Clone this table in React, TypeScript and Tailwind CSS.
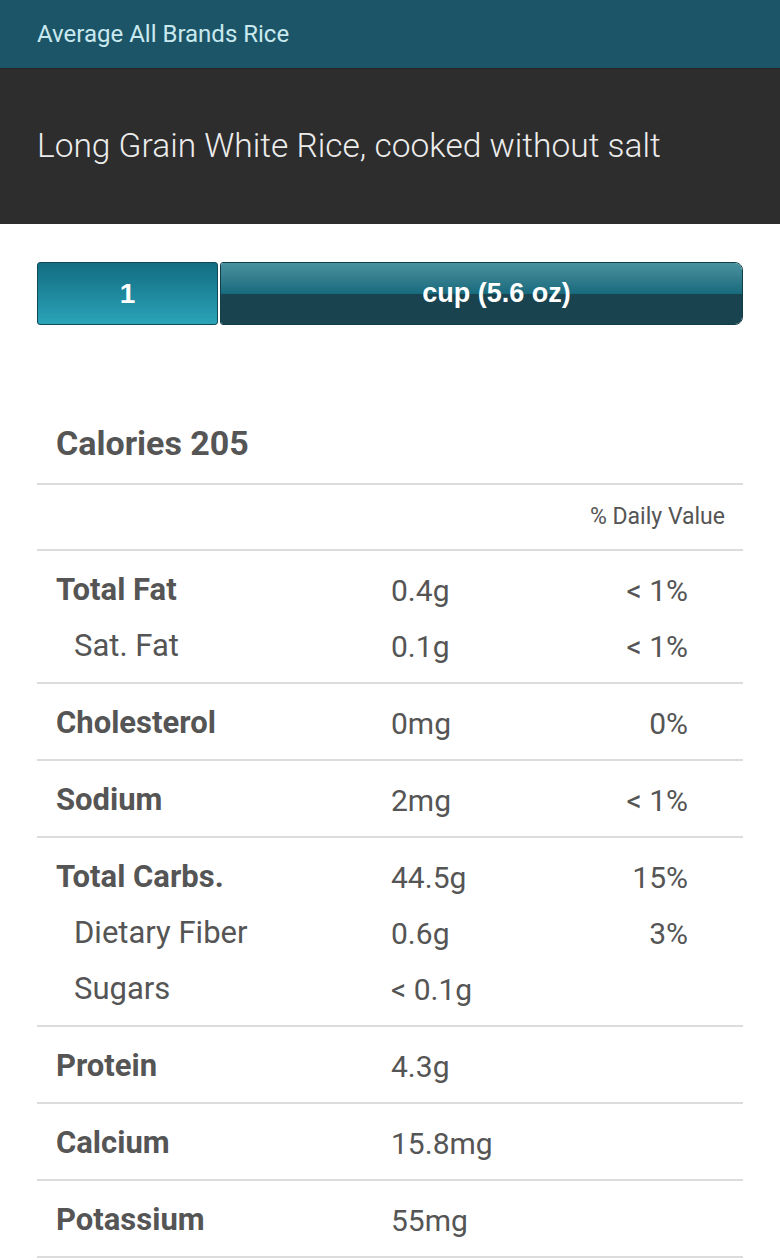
type Row = { label: string; value: string; pct?: string; sub?: boolean };

const sections: Row[][] = [
  [
    { label: "Total Fat", value: "0.4g", pct: "< 1%" },
    { label: "Sat. Fat", value: "0.1g", pct: "< 1%", sub: true },
  ],
  [{ label: "Cholesterol", value: "0mg", pct: "0%" }],
  [{ label: "Sodium", value: "2mg", pct: "< 1%" }],
  [
    { label: "Total Carbs.", value: "44.5g", pct: "15%" },
    { label: "Dietary Fiber", value: "0.6g", pct: "3%", sub: true },
    { label: "Sugars", value: "< 0.1g", sub: true },
  ],
  [{ label: "Protein", value: "4.3g" }],
  [{ label: "Calcium", value: "15.8mg" }],
  [{ label: "Potassium", value: "55mg" }],
];

export default function App() {
  return (
    <div className="w-[780px] min-h-[1260px] bg-white font-['Roboto',sans-serif] text-[#555555]">
      {/* top bar */}
      <div className="h-[68px] bg-[#1c5567] flex items-center px-[37px]">
        <span className="text-[24px] text-[#c9e9ef]">Average All Brands Rice</span>
      </div>

      {/* food title */}
      <div className="h-[156px] bg-[#2d2d2d] flex items-center px-[37px] border-t border-[#262626]">
        <h1 className="text-[33.5px] font-light text-[#ececec]">
          Long Grain White Rice, cooked without salt
        </h1>
      </div>

      <div className="px-[37px]">
        {/* serving selector */}
        <div className="mt-[38px] flex h-[63px] gap-[2px] font-['Liberation_Sans',sans-serif] font-bold text-white">
          <div className="w-[181px] flex items-center justify-center rounded-[3px] border border-[#104958] bg-gradient-to-b from-[#136d82] to-[#2aa3b8] text-[28px]">
            1
          </div>
          <div className="flex-1 flex flex-col rounded-l-[3px] rounded-r-[8px] border border-[#123e48] overflow-hidden relative">
            <div className="h-1/2 bg-gradient-to-b from-[#4a919e] to-[#166a7d]" />
            <div className="h-1/2 bg-[#19444f]" />
            <span className="absolute inset-0 flex items-center justify-center pl-[30px] text-[27px]">cup (5.6 oz)</span>
          </div>
        </div>

        {/* calories */}
        <div className="mt-[79px] h-[81px] flex items-center pl-[19px] border-b-2 border-[#dcdcdc]">
          <span className="text-[34px] font-bold">Calories 205</span>
        </div>
        <div className="h-[66px] flex items-center justify-end pr-[18px] border-b-2 border-[#dcdcdc]">
          <span className="text-[23px]">% Daily Value</span>
        </div>

        {/* nutrients */}
        {sections.map((rows, i) => (
          <div key={i} className="pt-[11px] pb-[8px] border-b-2 border-[#dcdcdc]">
            {rows.map((r) => (
              <div key={r.label} className="h-[56px] grid grid-cols-[335px_1fr_auto] items-center pl-[19px] pr-[55px] text-[30px]">
                <span className={r.sub ? "pl-[18px] text-[31px]" : "font-bold text-[31px]"}>{r.label}</span>
                <span>{r.value}</span>
                <span className="text-right">{r.pct ?? ""}</span>
              </div>
            ))}
          </div>
        ))}
      </div>
    </div>
  );
}
